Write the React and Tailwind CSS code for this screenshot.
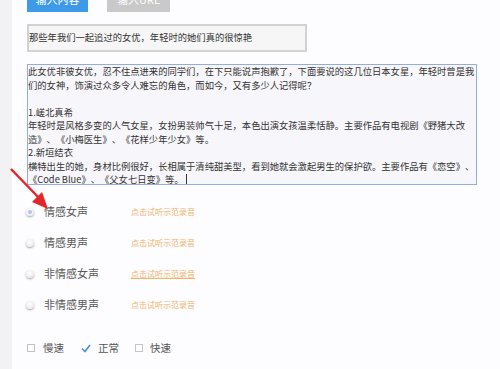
import React from 'react';

const font = { fontFamily: '"Noto Sans CJK SC", "Noto Sans", sans-serif' };

const lines = [
  '此女优非彼女优，忍不住点进来的同学们，在下只能说声抱歉了，下面要说的这几位日本女星，年轻时曾是我',
  '们的女神，饰演过众多令人难忘的角色，而如今，又有多少人记得呢？',
  '',
  '1.嵯北真希',
  '年轻时是风格多变的人气女星，女扮男装帅气十足，本色出演女孩温柔恬静。主要作品有电视剧《野猪大改',
  '造》、《小梅医生》、《花样少年少女》等。',
  '2.新垣结衣',
  '横特出生的她，身材比例很好，长相属于清纯甜美型，看到她就会激起男生的保护欲。主要作品有《恋空》、',
];

const voices = ['情感女声', '情感男声', '非情感女声', '非情感男声'];

const Radio = ({ checked }) => (
  <span className="w-[8px] h-[8px] rounded-full shadow-[0_1px_2px_rgba(0,0,0,0.35)] bg-[radial-gradient(circle_at_45%_40%,#ffffff_0%,#eeeeee_60%,#cfcfcf_100%)] flex items-center justify-center">
    {checked && <span className="w-[4px] h-[4px] rounded-full bg-[#a9c6ee]" />}
  </span>
);

const App = () => {
  return (
    <div className="relative w-[500px] h-[369px] flex overflow-hidden bg-[#fdfcfe] text-[#444] [text-spacing-trim:space-all]" style={font}>
      <div className="w-[12px] bg-[#f2f1f4]" />
      <div className="flex-1 pl-[15px] flex flex-col">
        {/* tabs */}
        <div className="flex items-start -mt-[13px]">
          <div className="w-[61px] h-[25px] bg-[#3d9ae8] text-white text-[11px] flex items-center justify-center">输入内容</div>
          <span className="w-[19px] h-[19px] flex items-center justify-center text-[#bbb] text-[10px] leading-none">↩</span>
          <div className="w-[63px] h-[25px] bg-[#c9c9c9] text-white text-[11px] flex items-center justify-center">输入URL</div>
        </div>

        {/* title input */}
        <div className="mt-[12px] w-[280px] h-[28px] border-2 border-[#d2d2d2] bg-[#f6f6f6] flex items-center text-[9.3px] text-[#333] whitespace-nowrap">
          那些年我们一起追过的女优，年轻时的她们真的很惊艳
        </div>

        {/* content box */}
        <div className="mt-[12px] w-[450px] h-[121px] border border-[#94aedb] bg-[#f7f6fa] text-[9.3px] leading-[13.5px] text-[#333] whitespace-nowrap overflow-hidden">
          {lines.map((l, i) => (
            <div key={i} className="h-[13.5px]">{l}</div>
          ))}
          <div className="h-[13.5px] flex items-center">
            <span>《Code Blue》、《父女七日变》等。</span>
            <span className="ml-[2px] w-px h-[12px] bg-[#333]" />
          </div>
        </div>

        {/* voice options */}
        <div className="mt-[11px] flex flex-col">
          {voices.map((v, i) => (
            <div key={v} className="h-[31px] flex items-center">
              <span className="w-[10px] flex justify-center ml-[-2px]">
                <Radio checked={i === 0} />
              </span>
              <span className="ml-[9px] w-[87px] text-[11px] text-[#5a5a5a]">{v}</span>
              <span className={`text-[8px] text-[#f0b56c] ${i === 2 ? 'underline' : ''}`}>点击试听示范录音</span>
            </div>
          ))}
        </div>

        {/* speed */}
        <div className="mt-[18px] h-[20px] flex items-center text-[10.5px] text-[#555]">
          <span className="w-[8px] h-[8px] border border-[#c4c4c4] bg-white" />
          <span className="ml-[8px]">慢速</span>
          <svg className="ml-[17px]" width="10" height="9" viewBox="0 0 10 9">
            <path d="M1 4.5 L4 7.5 L9 1" fill="none" stroke="#4a8fe0" strokeWidth="1.6" />
          </svg>
          <span className="ml-[7px]">正常</span>
          <span className="ml-[16px] w-[8px] h-[8px] border border-[#c4c4c4] bg-white" />
          <span className="ml-[7px]">快速</span>
        </div>
      </div>

      {/* red annotation arrow */}
      <svg className="absolute left-0 top-0 pointer-events-none" width="500" height="369">
        <line x1="11" y1="169" x2="40" y2="199" stroke="#e3262a" strokeWidth="2.5" />
        <polygon points="48,209 32,202 42,192" fill="#e3262a" />
      </svg>
    </div>
  );
};

export default App;
